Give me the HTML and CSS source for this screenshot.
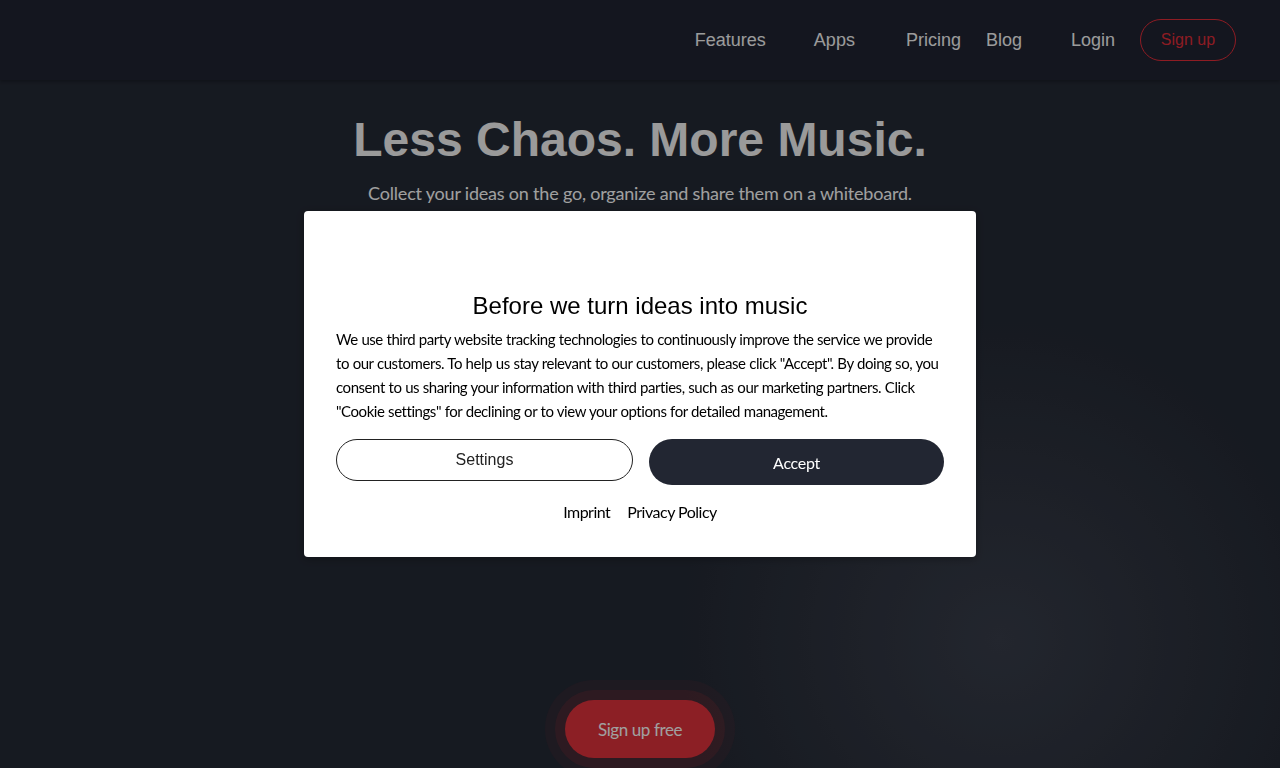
FILE: index.html
```html
<!DOCTYPE html>
<html lang="en">

<head>
  <meta charset="UTF-8">
  <meta name="viewport" content="width=device-width, initial-scale=1.0">
  <title>Less Chaos. More Music.</title>

  <link rel="stylesheet" href="styles.css">
</head>

<body>
  <header class="topbar">
    <nav class="nav">
      <a class="nav-link has-menu" href="#">Features</a>
      <a class="nav-link has-menu apps" href="#">Apps</a>
      <a class="nav-link" href="#">Pricing</a>
      <a class="nav-link" href="#">Blog</a>
      <a class="nav-link login" href="#">Login</a>
      <a class="button signup" href="#">Sign up</a>
    </nav>
  </header>

  <main class="hero">
    <h1>Less Chaos. More Music.</h1>
    <p class="lead">Collect your ideas on the go, organize and share them on a whiteboard.</p>
    <a class="button cta" href="#">Sign up free</a>
  </main>

  <div class="consent">
    <div class="consent-box">
      <h2>Before we turn ideas into music</h2>
      <p>We use third party website tracking technologies to continuously improve the service we provide to our customers. To help us stay relevant to our customers, please click "Accept". By doing so, you consent to us sharing your information with third parties, such as our marketing partners. Click "Cookie settings" for declining or to view your options for detailed management.</p>
      <div class="actions">
        <button class="btn btn-settings">Settings</button>
        <button class="btn btn-accept">Accept</button>
      </div>
      <div class="links">
        <a href="#">Imprint</a>
        <a href="#">Privacy Policy</a>
      </div>
    </div>
  </div>
</body>

</html>
```

FILE: styles.css
```css
* {
  box-sizing: border-box;
}

body {
  margin: 0;
  min-height: 768px;
  font-family: "Lato", "Noto Sans", sans-serif;
  color: #f6f6f6;
  background: radial-gradient(circle at 1000px 640px, #363b47 0, #2c313c 170px, #232833 320px) #232833;
}

a {
  text-decoration: none;
}

.topbar {
  height: 80px;
  background-color: #1f2330;
  box-shadow: 0 2px 3px rgba(0, 0, 0, .25);
}

.nav {
  height: 100%;
  display: flex;
  align-items: center;
  justify-content: flex-end;
  gap: 25px;
  padding-right: 44px;
  font-family: "Liberation Sans", Arial, sans-serif;
}

.nav-link {
  color: #eeeeee;
  font-size: 18px;
}

/* space kept for the dropdown caret */
.nav-link.has-menu {
  padding-right: 23px;
}
.nav-link.apps {
  padding-right: 26px;
}

.nav-link.login {
  margin-left: 24px;
}

.button.signup {
  width: 96px;
  height: 42px;
  display: flex;
  align-items: center;
  justify-content: center;
  border: 1px solid #da2b37;
  border-radius: 21px;
  color: #da2b37;
  font-size: 16px;
}

.hero {
  display: flex;
  flex-direction: column;
  align-items: center;
  padding-top: 36px;
}

.hero h1 {
  margin: 0;
  font-family: "Liberation Sans", Arial, sans-serif;
  font-size: 48px;
  line-height: 48px;
  font-weight: 700;
  color: #ededed;
}

.hero .lead {
  margin: 15px 0 0;
  font-size: 18px;
  line-height: 28px;
  letter-spacing: -0.2px;
  color: #f6f6f6;
}

.button.cta {
  margin-top: 493px;
  width: 150px;
  height: 58px;
  display: flex;
  align-items: center;
  justify-content: center;
  border-radius: 29px;
  background-color: #d7303a;
  color: #f6f6f6;
  font-size: 17px;
  letter-spacing: -0.4px;
  box-shadow: 0 0 0 10px rgba(215, 48, 58, .14), 0 0 0 20px rgba(215, 48, 58, .07);
}

.consent {
  position: fixed;
  top: 0;
  bottom: 0;
  left: 0;
  right: 0;
  display: flex;
  align-items: center;
  justify-content: center;
  background-color: rgba(0, 0, 0, .35);
}

.consent-box {
  width: 672px;
  padding: 81px 32px 33px;
  border-radius: 4px;
  background-color: #ffffff;
  box-shadow: 0 2px 8px rgba(0, 0, 0, .3);
  color: #000;
}

.consent-box h2 {
  margin: 0 0 7px;
  font-family: "Liberation Sans", Arial, sans-serif;
  font-size: 24px;
  line-height: 28px;
  font-weight: 400;
  text-align: center;
}

.consent-box p {
  margin: 0;
  font-size: 15px;
  line-height: 24px;
  letter-spacing: -0.45px;
  word-spacing: 0.3px;
}

.actions {
  display: flex;
  align-items: flex-start;
  gap: 16px;
  margin-top: 16px;
}

.btn {
  flex: 1;
  outline: none;
  cursor: pointer;
  border-radius: 23px;
}

.btn-settings {
  height: 42px;
  border: 1px solid #222;
  background-color: #fff;
  color: #222;
  font-family: "Liberation Sans", Arial, sans-serif;
  font-size: 16px;
}

.btn-accept {
  height: 46px;
  border: none;
  background-color: #222632;
  color: #fff;
  font-family: "Lato", "Noto Sans", sans-serif;
  font-size: 16px;
  letter-spacing: -0.3px;
}

.links {
  display: flex;
  justify-content: center;
  gap: 17px;
  margin-top: 15px;
  line-height: 24px;
  font-size: 16px;
  letter-spacing: -0.5px;
}

.links a {
  color: #000;
}
```
